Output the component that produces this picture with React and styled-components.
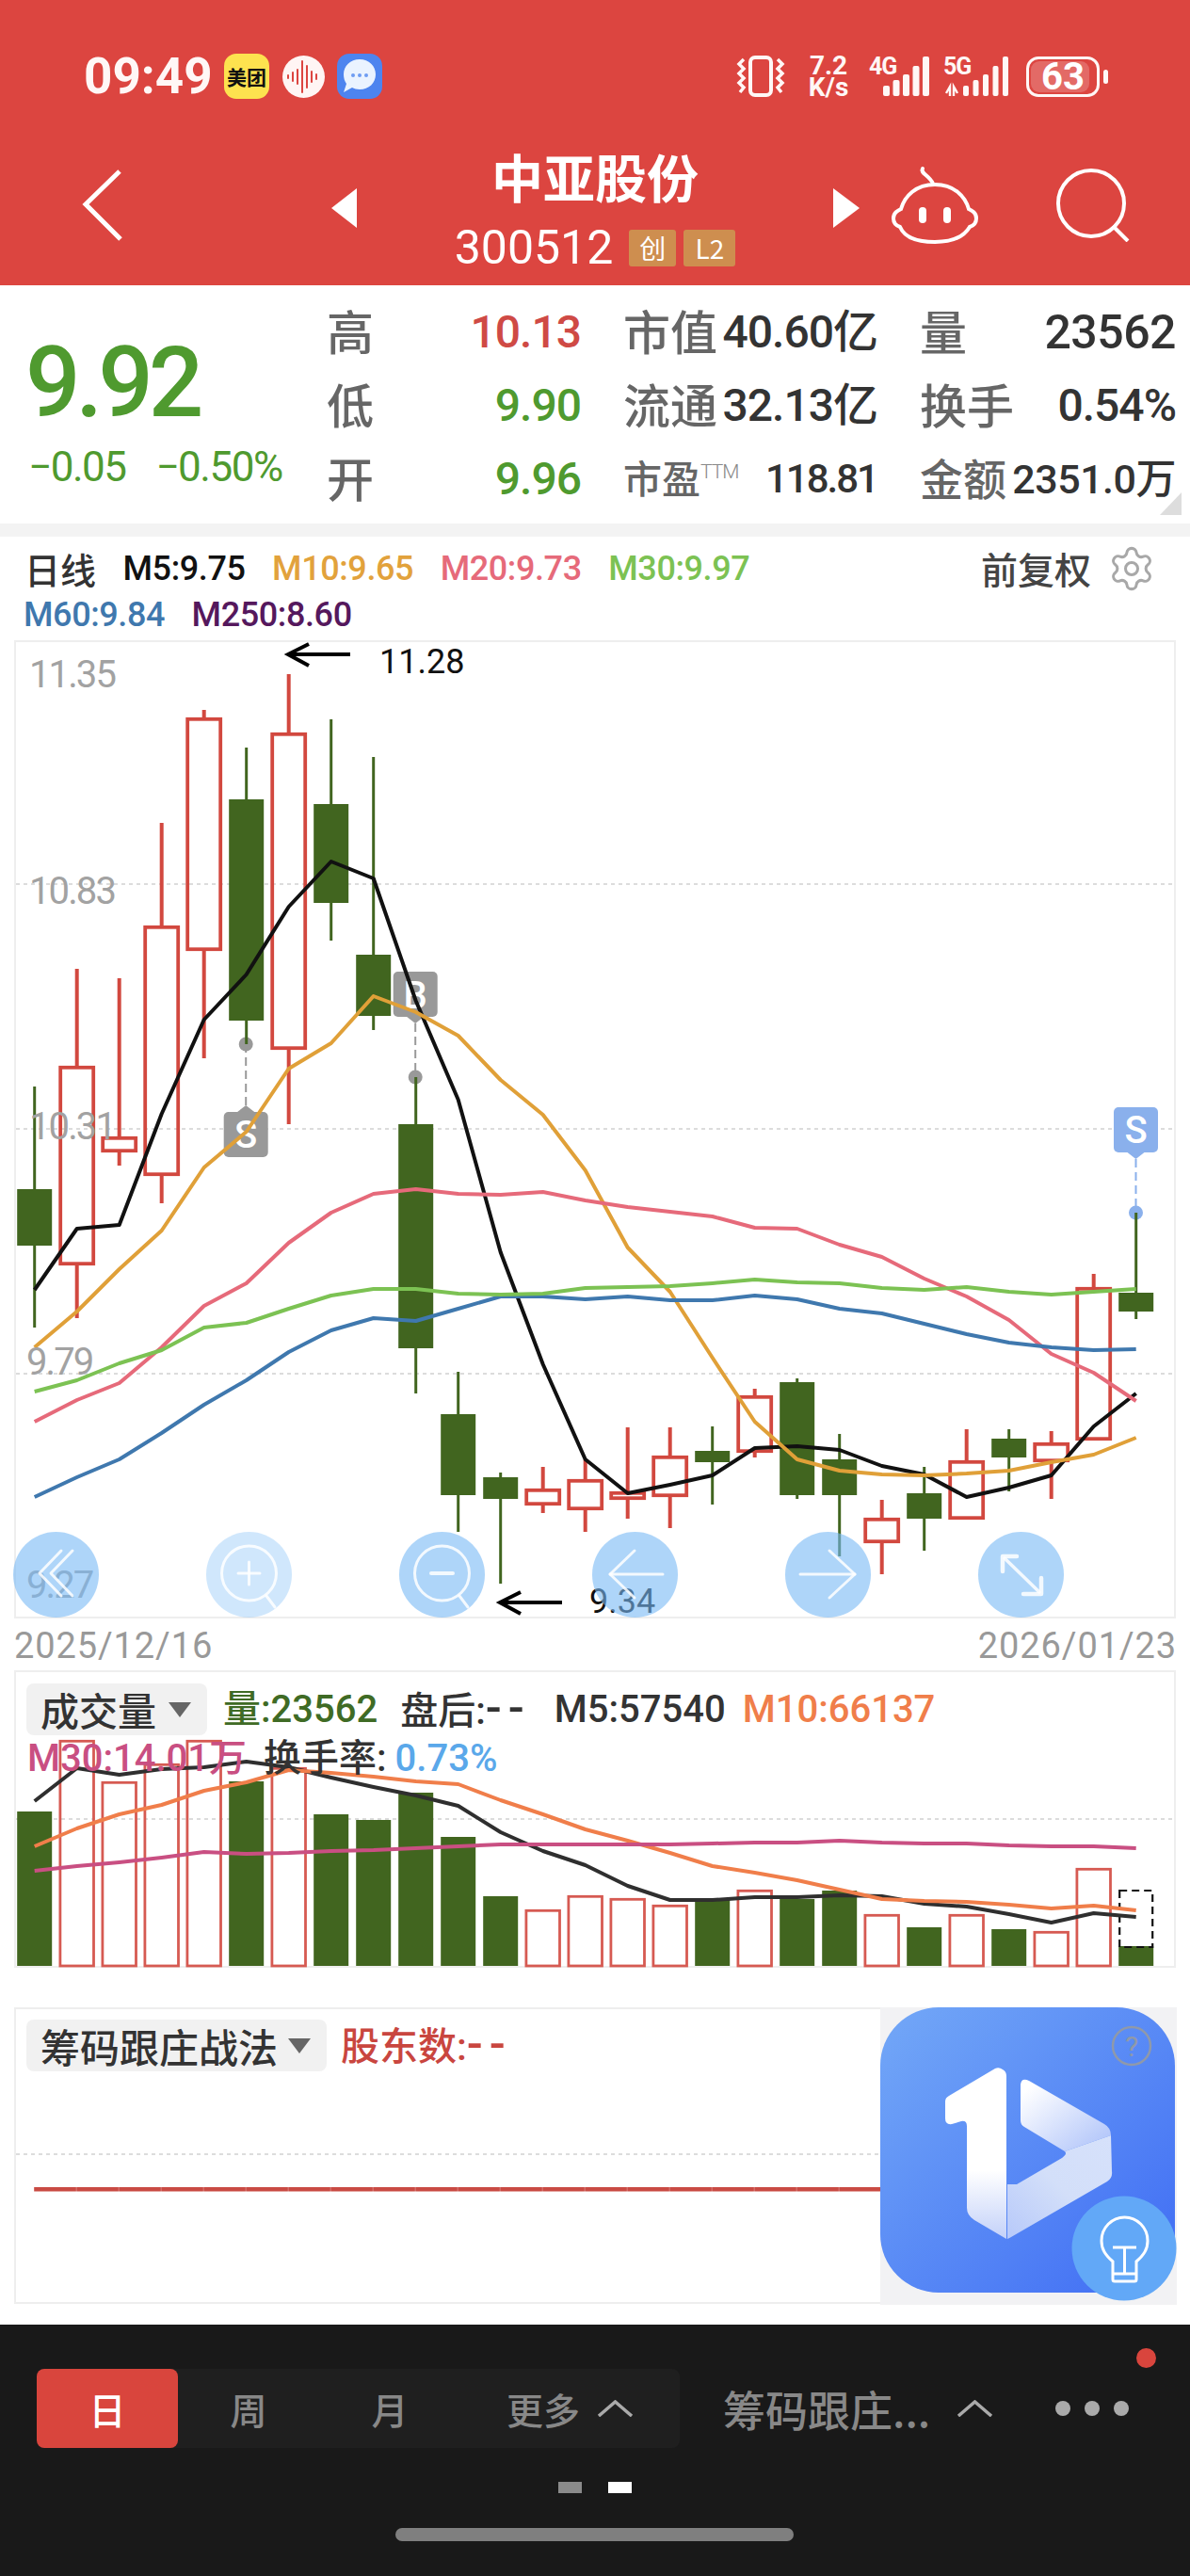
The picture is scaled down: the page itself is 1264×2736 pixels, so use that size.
import React from 'react';
import styled, { createGlobalStyle } from 'styled-components';
import { Settings } from 'lucide-react';

const CJK = '"Noto Sans CJK SC", "Noto Sans", sans-serif';
const NUM = 'Roboto, "Noto Sans CJK SC", sans-serif';
const RED = '#dc4540';
const UP = '#d2483f';
const DOWN = '#41651f';
const GAIN = '#cf4a45';
const LOSS = '#4f9a2f';

const GlobalStyle = createGlobalStyle`
  html, body { margin: 0; padding: 0; background: #fff; }
  * { box-sizing: border-box; }
`;

const Page = styled.div`
  width: 1264px;
  height: 2736px;
  overflow: hidden;
  background: #fff;
  display: flex;
  flex-direction: column;
  font-family: ${NUM};
`;

/* ---------- header ---------- */
const Header = styled.header`
  height: 303px;
  background: ${RED};
  color: #fff;
  flex: none;
`;
const StatusBar = styled.div`
  height: 105px;
  padding: 57px 87px 0 89px;
  display: flex;
  align-items: center;
  justify-content: space-between;
`;
const StatusLeft = styled.div`
  display: flex;
  align-items: center;
`;
const Time = styled.span`
  width: 149px;
  font: 700 53px/48px ${NUM};
  color: #fff7f6;
`;
const MeituanIcon = styled.span`
  width: 48px;
  height: 48px;
  border-radius: 13px;
  background: #fde24f;
  color: #111;
  font: 700 21px/48px ${CJK};
  text-align: center;
  white-space: nowrap;
  margin-right: 14px;
`;
const StatusRight = styled.div`
  display: flex;
  align-items: center;
  height: 48px;
`;
const Speed = styled.span`
  width: 46px;
  margin: 0 20px 0 23px;
  font: 700 28px/23px ${NUM};
  text-align: center;
  color: #fff7f6;
`;
const Net = styled.span`
  position: relative;
  width: ${p => p.$w}px;
  height: 44px;
  margin-right: ${p => p.$mr}px;
  color: #fff7f6;
`;
const NetLabel = styled.span`
  position: absolute;
  left: 0;
  top: 0;
  font: 700 25px/23px ${NUM};
  letter-spacing: -1px;
`;
const Battery = styled.span`
  position: relative;
  width: 78px;
  height: 43px;
  border: 3px solid #fff7f6;
  border-radius: 13px;
  font: 700 40px/37px ${NUM};
  text-align: center;
  color: #fff;
  &::before {
    content: '';
    position: absolute;
    inset: 2px 8px 2px 2px;
    border-radius: 9px;
    background: rgba(255, 255, 255, 0.2);
  }
`;
const BatteryNub = styled.span`
  width: 5px;
  height: 15px;
  margin-left: 4px;
  border-radius: 3px;
  background: #fff7f6;
`;
const NavBar = styled.nav`
  height: 198px;
  padding: 28px 0 0 87px;
  display: grid;
  grid-template-columns: 265px 27px 506px 28px 34px 92px 83px 78px;
  align-items: center;
`;
const NavArrow = styled.svg`
  display: block;
  margin-top: 6px;
`;
const Stock = styled.div`
  display: flex;
  flex-direction: column;
  align-items: center;
  margin-top: 3px;
`;
const Title = styled.div`
  font: 700 55px/60px ${CJK};
  color: #fff;
`;
const SubRow = styled.div`
  display: flex;
  align-items: center;
  gap: 8px;
  height: 40px;
  margin-top: 27px;
`;
const Code = styled.span`
  font: 400 50px/40px ${NUM};
  margin-right: 9px;
`;
const Tag = styled.span`
  width: ${p => p.$w}px;
  height: 39px;
  border-radius: 3px;
  background: #ce8e4f;
  font: 400 28px/39px ${CJK};
  text-align: center;
  color: #fff;
`;

/* ---------- quote ---------- */
const Quote = styled.section`
  position: relative;
  flex: none;
  height: 253px;
  display: flex;
`;
const PriceBlock = styled.div`
  width: 347px;
  padding: 56px 0 0 27px;
  color: ${LOSS};
`;
const Price = styled.div`
  font: 500 103px/96px ${NUM};
  letter-spacing: -5px;
`;
const Change = styled.div`
  display: flex;
  gap: 32px;
  margin: 21px 0 0 3px;
  font: 400 44px/40px ${NUM};
  letter-spacing: -1.5px;
`;
const Stats = styled.div`
  margin-top: 8px;
  display: grid;
  grid-template-columns: 270px 270px 272px;
  grid-auto-rows: 78px;
  column-gap: 45px;
`;
const Cell = styled.div`
  display: flex;
  align-items: center;
  justify-content: space-between;
`;
const StatLabel = styled.span`
  font: 500 ${p => p.$size || 50}px/1 ${CJK};
  color: #666;
  white-space: nowrap;
`;
const Ttm = styled.sup`
  font: 300 21px/1 ${NUM};
  color: #888;
  vertical-align: 16px;
  letter-spacing: -1px;
`;
const StatValue = styled.span`
  padding-top: 6px;
  font: 500 ${p => p.$size || 48}px/1 ${NUM};
  letter-spacing: ${p => p.$ls ?? -1}px;
  color: ${p => p.$color || '#333'};
  white-space: nowrap;
`;
const Corner = styled.span`
  position: absolute;
  right: 9px;
  bottom: 9px;
  width: 23px;
  height: 24px;
  background: #ddd;
  clip-path: polygon(100% 0, 100% 100%, 0 100%);
`;
const Separator = styled.div`
  flex: none;
  height: 14px;
  background: #f3f3f3;
`;

/* ---------- legend ---------- */
const Legend = styled.section`
  flex: none;
  height: 110px;
  padding-top: 9px;
`;
const LegendRow = styled.div`
  height: 49px;
  display: flex;
  align-items: center;
  gap: 28.5px;
  padding: 0 36px 0 ${p => p.$pl}px;
`;
const LegendTitle = styled.span`
  font: 500 38px/1 ${CJK};
  color: #333;
`;
const Ma = styled.span`
  font: 500 36px/1 ${NUM};
  letter-spacing: -0.4px;
  color: ${p => p.$color};
  white-space: nowrap;
`;
const LegendRight = styled.div`
  margin-left: auto;
  display: flex;
  align-items: center;
  gap: 17px;
  font: 500 39px/1 ${CJK};
  color: #444;
  svg { color: #a8a8a8; }
`;

/* ---------- chart panels ---------- */
const Panel = styled.section`
  position: relative;
  flex: none;
  margin: ${p => p.$mt || 0}px 15px 0;
  height: ${p => p.$h}px;
  box-shadow: inset 0 0 0 2px #eee;
`;
const Layer = styled.svg`
  position: absolute;
  left: 0;
  top: 0;
  display: block;
`;
const AxisLabel = styled.span`
  position: absolute;
  left: ${p => p.$x}px;
  top: ${p => p.$y}px;
  font: 400 40px/1 ${NUM};
  letter-spacing: -1.9px;
  color: #a2a2a2;
`;
const ExtremeLabel = styled.span`
  position: absolute;
  left: ${p => p.$x}px;
  top: ${p => p.$y}px;
  font: 400 36px/1 ${NUM};
  color: #111;
`;
const RoundButton = styled.span`
  position: absolute;
  left: ${p => p.$x}px;
  top: 947px;
  width: 91px;
  height: 91px;
  border-radius: 50%;
  background: rgba(120, 185, 245, ${p => (p.$dim ? 0.35 : 0.6)});
  svg {
    display: block;
    fill: none;
    stroke: rgba(255, 255, 255, 0.85);
    stroke-width: 3;
    stroke-linecap: round;
    stroke-linejoin: round;
  }
`;
const BadgeText = styled.text`
  font: 500 40px ${NUM};
  fill: #fff;
  text-anchor: middle;
`;
const DateRow = styled.div`
  flex: none;
  height: 55px;
  padding: 0 14px 0 15px;
  display: flex;
  align-items: center;
  justify-content: space-between;
  font: 400 38px/1 ${NUM};
  letter-spacing: 0.9px;
  color: #999;
  transform: translateY(1px);
`;
const IndicatorRow = styled.div`
  position: relative;
  display: flex;
  align-items: center;
  padding: ${p => p.$pt}px 0 0 ${p => p.$pl}px;
`;
const Dropdown = styled.span`
  width: ${p => p.$w}px;
  height: 55px;
  border-radius: 8px;
  background: #f1f1f1;
  padding-left: 15px;
  display: flex;
  align-items: center;
  font: 500 ${p => p.$size || 41}px/1 ${CJK};
  color: #333;
  margin-right: ${p => p.$mr}px;
  white-space: nowrap;
  &::after {
    content: '';
    margin-left: ${p => (p.$size ? 11 : 13)}px;
    border-left: 12px solid transparent;
    border-right: 12px solid transparent;
    border-top: 16px solid #666;
  }
`;
const Reading = styled.span`
  font: 500 ${p => p.$size || 40}px/1 ${NUM}, ${CJK};
  color: ${p => p.$color};
  margin-right: ${p => p.$mr || 0}px;
  white-space: nowrap;
`;
const Dashes = styled.span`
  font-size: 50px;
  letter-spacing: 7px;
  line-height: 40px;
`;
const Logo = styled.svg`
  position: absolute;
  right: -1px;
  top: 0;
  display: block;
`;
const LogoMark = styled.text`
  font: 400 30px ${NUM};
  fill: #8f99aa;
  text-anchor: middle;
`;

/* ---------- bottom bar ---------- */
const BottomBar = styled.footer`
  position: relative;
  flex: none;
  margin-top: 22px;
  height: 267px;
  background: #191919;
  padding-top: 47px;
  display: flex;
  flex-direction: column;
`;
const ToolRow = styled.div`
  display: flex;
  align-items: center;
  padding-left: 39px;
`;
const Tabs = styled.div`
  display: flex;
  width: 683px;
  height: 84px;
  border-radius: 8px;
  background: #1f1f1f;
`;
const Tab = styled.span`
  flex: ${p => (p.$wide ? 1 : '0 0 150px')};
  display: flex;
  align-items: center;
  justify-content: center;
  gap: 18px;
  border-radius: 8px;
  background: ${p => (p.$active ? '#d9453d' : 'transparent')};
  color: ${p => (p.$active ? '#fff' : '#888')};
  font: 500 39px/1 ${CJK};
`;
const IndicatorName = styled.span`
  width: 217px;
  margin: 0 31px 0 46px;
  font: 500 45px/1 ${CJK};
  color: #888;
  white-space: nowrap;
`;
const MoreDots = styled.span`
  display: flex;
  gap: 15px;
  margin-left: 66px;
`;
const Dot = styled.span`
  width: 16px;
  height: 16px;
  border-radius: 50%;
  background: #aaa;
`;
const Notice = styled.span`
  position: absolute;
  left: 1207px;
  top: 25px;
  width: 21px;
  height: 21px;
  border-radius: 50%;
  background: #d9453d;
`;
const Pager = styled.div`
  display: flex;
  justify-content: center;
  gap: 28px;
  margin-top: 36px;
`;
const PagerMark = styled.span`
  width: 25px;
  height: 12px;
  background: ${p => (p.$on ? '#fff' : '#8a8a8a')};
`;
const HomeBar = styled.div`
  width: 423px;
  height: 14px;
  margin: 37px 0 0 420px;
  border-radius: 7px;
  background: #7f7f7f;
`;

/* ---------- data ---------- */
const X0 = 36.7;
const STEP = 45;
const cx = i => X0 + STEP * i;

// high, body top, body bottom, low, rising
const CANDLES = [
  [1154, 1263, 1323, 1410, 0], [1029, 1132, 1344, 1400, 1], [1039, 1207, 1224, 1238, 1],
  [874, 983, 1249, 1278, 1], [754, 762, 1010, 1124, 1], [794, 849, 1084, 1109, 0],
  [716, 778, 1115, 1194, 1], [764, 854, 959, 999, 0], [804, 1014, 1079, 1094, 0],
  [1144, 1194, 1432, 1480, 0], [1457, 1502, 1588, 1627, 0], [1564, 1569, 1592, 1682, 0],
  [1558, 1581, 1599, 1607, 1], [1550, 1571, 1604, 1627, 1], [1516, 1584, 1593, 1613, 1],
  [1516, 1546, 1590, 1623, 1], [1515, 1541, 1553, 1598, 0], [1475, 1482, 1543, 1548, 1],
  [1464, 1468, 1588, 1592, 0], [1523, 1550, 1588, 1653, 0], [1593, 1612, 1639, 1672, 1],
  [1558, 1586, 1613, 1647, 0], [1518, 1551, 1614, 1614, 1], [1518, 1528, 1548, 1584, 0],
  [1520, 1532, 1553, 1592, 1], [1353, 1367, 1530, 1530, 1], [1288, 1373, 1393, 1401, 0],
];

const MA = {
  black: [1370, 1305, 1301, 1183, 1083, 1035, 963, 915, 933, 1063, 1168, 1330, 1449, 1550, 1586, 1577, 1567, 1538, 1536, 1540, 1557, 1566, 1590, 1580, 1567, 1515, 1480],
  orange: [1431, 1393, 1348, 1307, 1240, 1202, 1135, 1108, 1058, 1075, 1100, 1147, 1184, 1243, 1325, 1372, 1442, 1510, 1550, 1562, 1566, 1567, 1565, 1562, 1553, 1545, 1527],
  pink: [1510, 1487, 1469, 1431, 1387, 1363, 1320, 1288, 1268, 1263, 1268, 1269, 1266, 1275, 1282, 1287, 1292, 1304, 1305, 1322, 1335, 1358, 1377, 1402, 1438, 1458, 1488],
  blue: [1590, 1569, 1550, 1522, 1492, 1466, 1436, 1413, 1400, 1403, 1390, 1377, 1377, 1380, 1377, 1381, 1381, 1376, 1380, 1390, 1395, 1406, 1417, 1426, 1431, 1434, 1433],
  green: [1478, 1466, 1448, 1434, 1410, 1405, 1390, 1376, 1369, 1369, 1374, 1375, 1374, 1368, 1367, 1366, 1363, 1359, 1362, 1363, 1368, 1370, 1367, 1372, 1375, 1372, 1369],
};
const MA_COLORS = { black: '#111', orange: '#e0a038', pink: '#e66a7a', blue: '#3f78ae', green: '#7cc253' };

const VOLUME = [
  [1924, 0], [1848, 1], [1892, 1], [1873, 1], [1848, 1], [1892, 0], [1877, 1], [1927, 0], [1933, 0],
  [1904, 0], [1951, 0], [2014, 0], [2028, 1], [2013, 1], [2016, 1], [2023, 1], [2018, 0], [2007, 1],
  [2017, 0], [2008, 0], [2033, 1], [2047, 0], [2033, 1], [2049, 0], [2051, 1], [1984, 1], [2067, 0],
];
const VOL_MA = {
  '#2f2f2f': [1913, 1878, 1885, 1879, 1877, 1871, 1877, 1888, 1898, 1907, 1918, 1946, 1966, 1981, 2003, 2018, 2018, 2015, 2015, 2013, 2014, 2022, 2025, 2033, 2042, 2032, 2036],
  '#f07e4a': [1961, 1942, 1927, 1917, 1902, 1893, 1880, 1883, 1887, 1892, 1895, 1912, 1927, 1943, 1955, 1968, 1982, 1989, 1997, 2007, 2017, 2019, 2020, 2023, 2027, 2024, 2029],
  '#c94f82': [1987, 1982, 1978, 1973, 1967, 1969, 1968, 1966, 1965, 1963, 1961, 1959, 1959, 1959, 1959, 1959, 1958, 1957, 1957, 1955, 1957, 1958, 1958, 1960, 1961, 1961, 1963],
};

const pts = ys => ys.map((y, i) => `${cx(i)},${y}`).join(' ');

const Candle = ({ d, i }) => {
  const [h, t, b, l, up] = d;
  const x = cx(i);
  const color = up ? UP : DOWN;
  const w = up ? 4 : 3;
  return (
    <g>
      <line x1={x} x2={x} y1={h} y2={t} stroke={color} strokeWidth={w} />
      <line x1={x} x2={x} y1={b} y2={l} stroke={color} strokeWidth={w} />
      {up ? (
        <rect x={x - 17.5} y={t + 1.8} width={35} height={b - t - 3.6} fill="none" stroke={UP} strokeWidth={3.8} />
      ) : (
        <rect x={x - 18.5} y={t} width={37} height={b - t} fill={DOWN} />
      )}
    </g>
  );
};

const Signal = ({ x, y, dotY, up, color, letter, ty }) => {
  const top = y;
  const bottom = y + 48;
  const tip = up ? top - 7 : bottom + 7;
  return (
    <g>
      <line x1={x} x2={x} y1={tip} y2={dotY} stroke={color} strokeWidth={2} strokeDasharray="9 5" />
      <circle cx={x} cy={dotY} r={7.5} fill={color} />
      <rect x={x - 23.5} y={top} width={47} height={48} rx={5} fill={color} />
      <polygon points={up ? `${x - 9},${top} ${x + 9},${top} ${x},${tip}` : `${x - 9},${bottom} ${x + 9},${bottom} ${x},${tip}`} fill={color} />
      <BadgeText x={x} y={ty}>{letter}</BadgeText>
    </g>
  );
};

const Arrow = ({ x, y }) => (
  <g fill="none" stroke="#000" strokeWidth={4}>
    <line x1={x + 1} x2={x + 67} y1={y} y2={y} />
    <polyline points={`${x + 23},${y - 11} ${x + 1},${y} ${x + 23},${y + 12}`} />
  </g>
);

const GridLine = ({ y }) => (
  <line x1={17} x2={1247} y1={y} y2={y} stroke="#dcdcdc" strokeWidth={2} strokeDasharray="4 4" />
);

const CHART_BUTTONS = [
  { x: -1, icon: <><polyline points="51,20 28,44 51,68" /><polyline points="63,20 40,44 63,68" /></> },
  { x: 204, dim: true, icon: <><circle cx="45.5" cy="44" r="29" /><line x1="64" y1="68" x2="73" y2="80" /><line x1="34" y1="44" x2="57" y2="44" /><line x1="45.5" y1="32" x2="45.5" y2="56" /></> },
  { x: 409, icon: <><circle cx="45.5" cy="44" r="29" /><line x1="64" y1="68" x2="73" y2="80" /><line x1="34" y1="44" x2="57" y2="44" strokeWidth="4" /></> },
  { x: 614, icon: <><line x1="75" y1="45" x2="19" y2="45" /><polyline points="45,20 19,45 45,70" /></> },
  { x: 819, icon: <><line x1="16" y1="45" x2="74" y2="45" /><polyline points="47,20 74,45 47,70" /></> },
  { x: 1024, icon: <g strokeWidth="4.5"><line x1="28" y1="28" x2="65" y2="64" strokeWidth="3.5" /><polyline points="41,26 26,26 26,42" /><polyline points="67,49 67,66 48,66" /></g> },
];

const Caret = () => (
  <svg width="39" height="18" viewBox="0 0 39 18" fill="none" stroke="#aaa" strokeWidth="3.5">
    <polyline points="2,17 19.5,2 37,17" />
  </svg>
);

const Wave = () => (
  <svg width="45" height="45" viewBox="0 0 45 45" style={{ marginRight: 13 }}>
    <circle cx="22.5" cy="22.5" r="22.5" fill="#fff5f4" />
    <g stroke={RED} strokeWidth="2" strokeLinecap="round">
      <line x1="6" x2="6" y1="21" y2="24" />
      <line x1="11" x2="11" y1="18" y2="27" />
      <line x1="16" x2="16" y1="15" y2="30" />
      <line x1="21" x2="21" y1="6" y2="39" />
      <line x1="26" x2="26" y1="11" y2="34" />
      <line x1="31" x2="31" y1="17" y2="28" />
      <line x1="36" x2="36" y1="20" y2="25" />
    </g>
  </svg>
);

const Bubble = () => (
  <svg width="48" height="48" viewBox="0 0 48 48">
    <rect width="48" height="48" rx="13" fill="#4d84ef" />
    <path d="M24 6 C34 6 41 13 41 22 C41 31 34 38 24 38 C21 38 18 37 16 36 L7 41 L10 32 C8 29 7 26 7 22 C7 13 14 6 24 6 Z" fill="#eaf3ff" />
    <circle cx="17" cy="23" r="2" fill="#6d9cf3" />
    <circle cx="24" cy="23" r="2" fill="#6d9cf3" />
    <circle cx="31" cy="23" r="2" fill="#6d9cf3" />
  </svg>
);

const Vibrate = () => (
  <svg width="52" height="44" viewBox="0 0 52 44" fill="none" stroke="#fff7f6" strokeWidth="3.5">
    <rect x="15" y="2" width="22" height="40" rx="5" strokeWidth="4" />
    <path d="M8 4 L3 9 L8 14 L3 19 L8 24 L3 29 L8 34 L4 39" />
    <path d="M44 4 L49 9 L44 14 L49 19 L44 24 L49 29 L44 34 L48 39" />
  </svg>
);

const SignalBars = ({ tops, w = 7, step = 10.5, x0, children }) => (
  <svg width="84" height="44" viewBox="0 0 84 44" style={{ position: 'absolute', left: 0, top: 0 }}>
    {tops.map((t, i) => (
      <rect key={i} x={x0 + step * i} y={t} width={w} height={43 - t} rx="2" fill="#fff7f6" />
    ))}
    {children}
  </svg>
);

export default function App() {
  return (
    <Page>
      <GlobalStyle />
      <Header>
        <StatusBar>
          <StatusLeft>
            <Time>09:49</Time>
            <MeituanIcon>美团</MeituanIcon>
            <Wave />
            <Bubble />
          </StatusLeft>
          <StatusRight>
            <Vibrate />
            <Speed>7.2<br />K/s</Speed>
            <Net $w={65} $mr={14}>
              <SignalBars x0={15} tops={[32, 26, 20, 11, 1]} />
              <NetLabel>4G</NetLabel>
            </Net>
            <Net $w={70} $mr={18}>
              <SignalBars x0={21} w={6} tops={[32, 26, 20, 11, 1]}>
                <path d="M3 40 L7 33 L7 43 M11 43 L11 33 L15 40" stroke="#fff7f6" strokeWidth="2.4" fill="none" />
              </SignalBars>
              <NetLabel>5G</NetLabel>
            </Net>
            <Battery>63</Battery>
            <BatteryNub />
          </StatusRight>
        </StatusBar>
        <NavBar>
          <svg width="44" height="76" viewBox="0 0 44 76" fill="none" stroke="#fff" strokeWidth="5">
            <polyline points="40,2 4,37 41,74" />
          </svg>
          <NavArrow width="27" height="42" viewBox="0 0 27 42"><polygon points="27,0 27,42 0,21" fill="#fff" /></NavArrow>
          <Stock>
            <Title>中亚股份</Title>
            <SubRow>
              <Code>300512</Code>
              <Tag $w={50}>创</Tag>
              <Tag $w={55}>L2</Tag>
            </SubRow>
          </Stock>
          <NavArrow width="28" height="42" viewBox="0 0 28 42"><polygon points="0,0 0,42 28,21" fill="#fff" /></NavArrow>
          <span />
          <svg width="92" height="84" viewBox="0 0 92 84" fill="none" stroke="#fff" strokeWidth="4">
            <path d="M33 3 C30 8 40 10 44 19" strokeLinecap="round" />
            <path d="M46 20 C66 20 78 32 82 46 C86 48 90 50 90 56 C90 62 86 64 83 65 C76 77 62 81 46 81 C30 81 14 77 9 65 C6 64 2 62 2 56 C2 50 6 48 10 46 C14 32 26 20 46 20 Z" />
            <rect x="29" y="44" width="8" height="17" rx="4" fill="#fff" stroke="none" />
            <rect x="55" y="44" width="8" height="17" rx="4" fill="#fff" stroke="none" />
          </svg>
          <span />
          <svg width="78" height="78" viewBox="0 0 78 78" fill="none" stroke="#fff" strokeWidth="4">
            <circle cx="37" cy="37" r="35" />
            <line x1="60" y1="61" x2="76" y2="77" />
          </svg>
        </NavBar>
      </Header>

      <Quote>
        <PriceBlock>
          <Price>9.92</Price>
          <Change><span>−0.05</span><span>−0.50%</span></Change>
        </PriceBlock>
        <Stats>
          <Cell><StatLabel>高</StatLabel><StatValue $color={GAIN}>10.13</StatValue></Cell>
          <Cell><StatLabel>市值</StatLabel><StatValue>40.60亿</StatValue></Cell>
          <Cell><StatLabel>量</StatLabel><StatValue $size={50} $ls={-0.5}>23562</StatValue></Cell>
          <Cell><StatLabel>低</StatLabel><StatValue $color={LOSS}>9.90</StatValue></Cell>
          <Cell><StatLabel>流通</StatLabel><StatValue>32.13亿</StatValue></Cell>
          <Cell><StatLabel>换手</StatLabel><StatValue>0.54%</StatValue></Cell>
          <Cell><StatLabel>开</StatLabel><StatValue $color={LOSS}>9.96</StatValue></Cell>
          <Cell><StatLabel $size={41}>市盈<Ttm>TTM</Ttm></StatLabel><StatValue $size={42} $ls={-2}>118.81</StatValue></Cell>
          <Cell><StatLabel $size={46}>金额</StatLabel><StatValue $size={43} $ls={-0.5}>2351.0万</StatValue></Cell>
        </Stats>
        <Corner />
      </Quote>
      <Separator />

      <Legend>
        <LegendRow $pl={26}>
          <LegendTitle>日线</LegendTitle>
          <Ma $color="#111">M5:9.75</Ma>
          <Ma $color="#e2a23c">M10:9.65</Ma>
          <Ma $color="#e66a7a">M20:9.73</Ma>
          <Ma $color="#7cc253">M30:9.97</Ma>
          <LegendRight>前复权<Settings size={52} strokeWidth={1.4} /></LegendRight>
        </LegendRow>
        <LegendRow $pl={25}>
          <Ma $color="#3f78ae">M60:9.84</Ma>
          <Ma $color="#55185d">M250:8.60</Ma>
        </LegendRow>
      </Legend>

      <Panel $h={1039}>
        <Layer width="1234" height="1039" viewBox="15 680 1234 1039">
          <GridLine y={939} />
          <GridLine y={1199} />
          <GridLine y={1459} />
          <Signal x={261.2} y={1181} dotY={1109} up color="#999" letter="S" ty={1219} />
          <Signal x={441.2} y={1032} dotY={1144} color="#999" letter="B" ty={1071} />
          <Signal x={1206.5} y={1176} dotY={1288} color="#8ab0ec" letter="S" ty={1214} />
          {CANDLES.map((d, i) => <Candle key={i} d={d} i={i} />)}
          {Object.keys(MA).map(k => (
            <polyline key={k} points={pts(MA[k])} fill="none" stroke={MA_COLORS[k]} strokeWidth={4} strokeLinejoin="round" />
          ))}
          <Arrow x={305} y={695} />
          <Arrow x={530} y={1702} />
        </Layer>
        <AxisLabel $x={16} $y={17}>11.35</AxisLabel>
        <AxisLabel $x={16} $y={247}>10.83</AxisLabel>
        <AxisLabel $x={16} $y={497}>10.31</AxisLabel>
        <AxisLabel $x={13} $y={747}>9.79</AxisLabel>
        <AxisLabel $x={13} $y={984}>9.27</AxisLabel>
        <ExtremeLabel $x={388} $y={5}>11.28</ExtremeLabel>
        <ExtremeLabel $x={611} $y={1003}>9.34</ExtremeLabel>
        {CHART_BUTTONS.map(b => (
          <RoundButton key={b.x} $x={b.x} $dim={b.dim}>
            <svg width="91" height="91" viewBox="0 0 91 91">{b.icon}</svg>
          </RoundButton>
        ))}
      </Panel>

      <DateRow><span>2025/12/16</span><span>2026/01/23</span></DateRow>

      <Panel $h={316}>
        <Layer width="1234" height="316" viewBox="15 1774 1234 316">
          <GridLine y={1932} />
          {VOLUME.map(([top, up], i) => up ? (
            <rect key={i} x={cx(i) - 17.8} y={top + 1.3} width={35.6} height={2088 - top - 1.3} fill="none" stroke="#d65a52" strokeWidth={2.8} />
          ) : (
            <rect key={i} x={cx(i) - 18.5} y={top} width={37} height={2088 - top} fill={DOWN} />
          ))}
          <rect x={cx(26) - 17.5} y={2008} width={35} height={60} fill="none" stroke="#111" strokeWidth={2.2} strokeDasharray="8 5" />
          {Object.keys(VOL_MA).map(c => (
            <polyline key={c} points={pts(VOL_MA[c])} fill="none" stroke={c} strokeWidth={4} strokeLinejoin="round" />
          ))}
        </Layer>
        <IndicatorRow $pt={14} $pl={13}>
          <Dropdown $w={192} $mr={17}>成交量</Dropdown>
          <Reading $color="#3f6b25" $mr={24}>量:23562</Reading>
          <Reading $color="#333" $mr={25}>盘后:<Dashes>--</Dashes></Reading>
          <Reading $color="#333" $mr={18}>M5:57540</Reading>
          <Reading $color="#f07e4a">M10:66137</Reading>
        </IndicatorRow>
        <IndicatorRow $pt={5} $pl={14}>
          <Reading $color="#c94f82" $mr={18}>M30:14.01万</Reading>
          <Reading $color="#333" $mr={9}>换手率:</Reading>
          <Reading $color="#5aa8ea">0.73%</Reading>
        </IndicatorRow>
      </Panel>

      <Panel $h={315} $mt={42}>
        <Layer width="1234" height="315" viewBox="15 2132 1234 315">
          <GridLine y={2288} />
          {CANDLES.map((_, i) => (
            <rect key={i} x={cx(i) - 0.5} y={2323} width={44.7} height={4.5} fill="#c94a43" />
          ))}
        </Layer>
        <IndicatorRow $pt={13} $pl={13}>
          <Dropdown $w={319} $mr={15} $size={42}>筹码跟庄战法</Dropdown>
          <Reading $color="#c9463f" $size={41}>股东数:<Dashes>--</Dashes></Reading>
        </IndicatorRow>
        <Logo width="315" height="316" viewBox="934 2132 315 316">
          <defs>
            <linearGradient id="logoBg" x1="0" y1="0" x2="1" y2="1">
              <stop offset="0" stopColor="#73a8f7" />
              <stop offset="1" stopColor="#3f6cf4" />
            </linearGradient>
            <linearGradient id="logoOne" x1="0" y1="0" x2="0" y2="1">
              <stop offset="0.6" stopColor="#fff" />
              <stop offset="1" stopColor="#c3d1f9" />
            </linearGradient>
            <linearGradient id="logoTop" x1="0" y1="0" x2="1" y2="1">
              <stop offset="0.1" stopColor="#fff" />
              <stop offset="0.9" stopColor="#b4c7fa" />
            </linearGradient>
            <linearGradient id="logoLow" x1="0" y1="1" x2="1" y2="0">
              <stop offset="0" stopColor="#b7c9fa" />
              <stop offset="0.5" stopColor="#d3dff9" />
              <stop offset="1" stopColor="#d6e1fb" />
            </linearGradient>
          </defs>
          <rect x="934" y="2132" width="315" height="316" fill="#f2f2f4" />
          <rect x="934" y="2132" width="313" height="303" rx="62" fill="url(#logoBg)" />
          <path d="M1056 2197 Q1060 2195 1064 2198 Q1068 2200 1068 2205 L1068 2378 L1034 2358 Q1026 2353 1026 2345 L1026 2258 Q1026 2252 1020 2253 L1010 2256 Q1003 2257 1003 2250 L1003 2232 Q1003 2228 1007 2226 Z" fill="url(#logoOne)" />
          <path d="M1083 2214 Q1084 2206 1092 2210 L1172 2256 Q1179 2260 1179 2268 L1130 2285 L1087 2259 Q1083 2257 1083 2252 Z" fill="url(#logoTop)" />
          <path d="M1179 2268 L1180 2306 Q1181 2313 1175 2317 L1073 2376 Q1069 2378 1069 2378 L1069 2320 L1079 2320 L1127 2292 Q1133 2288 1130 2285 Z" fill="url(#logoLow)" />
          <ellipse cx="1201" cy="2173" rx="20" ry="20" fill="none" stroke="#8f99aa" strokeWidth="2.5" />
          <LogoMark x="1201" y="2184">?</LogoMark>
          <circle cx="1193" cy="2388" r="55.5" fill="#62a8f7" />
          <path d="M1181 2402 C1173 2395 1169 2389 1169 2380 A24.5 25 0 0 1 1218 2380 C1218 2389 1214 2395 1206 2402 L1206 2421 Q1206 2423 1204 2423 L1183 2423 Q1181 2423 1181 2421 Z M1181 2387 L1206 2387 M1193.5 2387 L1193.5 2415 M1181 2415 L1206 2415" fill="none" stroke="#fff" strokeWidth="3" />
        </Logo>
      </Panel>

      <BottomBar>
        <Notice />
        <ToolRow>
          <Tabs>
            <Tab $active>日</Tab>
            <Tab>周</Tab>
            <Tab>月</Tab>
            <Tab $wide>更多<Caret /></Tab>
          </Tabs>
          <IndicatorName>筹码跟庄...</IndicatorName>
          <Caret />
          <MoreDots><Dot /><Dot /><Dot /></MoreDots>
        </ToolRow>
        <Pager><PagerMark /><PagerMark $on /></Pager>
        <HomeBar />
      </BottomBar>
    </Page>
  );
}
